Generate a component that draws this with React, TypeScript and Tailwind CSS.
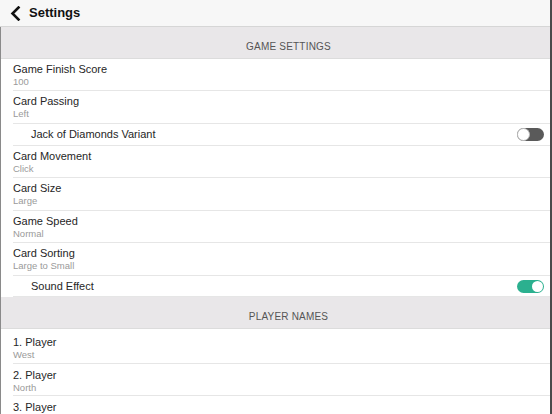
import React from "react";

function Toggle({ on }: { on: boolean }) {
  return on ? (
    <div className="relative w-[27px] h-[13px] rounded-full bg-[#2bb08f]">
      <div className="absolute right-[1px] top-[1px] w-[11px] h-[11px] rounded-full bg-white" />
    </div>
  ) : (
    <div className="relative w-[27px] h-[13px] rounded-full bg-[#5a5a5a]">
      <div className="absolute left-0 top-0 w-[13px] h-[13px] rounded-full bg-white border border-[#bdbdbd]" />
    </div>
  );
}

function TwoLine({ title, sub, h, pt = "pt-[3px]" }: { title: string; sub: string; h: string; pt?: string }) {
  return (
    <div className={`pl-[12px] shrink-0 ${h}`}>
      <div className={`flex flex-col h-full border-b border-[#e6e6e6] ${pt}`}>
        <div className="text-[11px] leading-[14px] text-[#262626]">{title}</div>
        <div className="text-[9.5px] leading-[11px] text-[#9a9a9a]">{sub}</div>
      </div>
    </div>
  );
}

function ToggleRow({ title, on, h }: { title: string; on: boolean; h: string }) {
  return (
    <div className={`pl-[12px] shrink-0 ${h}`}>
      <div className="flex items-center h-full border-b border-[#e6e6e6] pl-[18px] pr-[6px]">
        <div className="flex-1 text-[11px] text-[#262626]">{title}</div>
        <Toggle on={on} />
      </div>
    </div>
  );
}

function Section({ label }: { label: string }) {
  return (
    <div className="h-[32px] shrink-0 bg-[#e9e7e9] border-b border-[#dcdcdc] flex items-end justify-center pb-[5px] pl-[26px] text-[10px] leading-[12px] text-[#555] tracking-[0.2px]">
      {label}
    </div>
  );
}

export default function App() {
  return (
    <div
      className="w-[552px] h-[414px] overflow-hidden bg-white flex flex-col border-r-2 border-[#4a4a4a]"
      style={{ fontFamily: '"Liberation Sans", Arial, sans-serif' }}
    >
      <div className="h-[27px] shrink-0 bg-[#f7f7f7] border-b border-[#d6d6d6] flex items-center pl-[10px] gap-[8px]">
        <svg width="11" height="15" viewBox="0 0 11 15">
          <path d="M8.5 1.5 L2.5 7.5 L8.5 13.5" fill="none" stroke="#111" strokeWidth="2.6" strokeLinecap="square" />
        </svg>
        <span className="text-[13px] font-bold text-[#111]">Settings</span>
      </div>
      <div className="flex-1 flex flex-col border-l border-[#8a8a8a]">
        <Section label="GAME SETTINGS" />
        <TwoLine title="Game Finish Score" sub="100" h="h-[32px]" />
        <TwoLine title="Card Passing" sub="Left" h="h-[33px]" />
        <ToggleRow title="Jack of Diamonds Variant" on={false} h="h-[22px]" />
        <TwoLine title="Card Movement" sub="Click" h="h-[32px]" />
        <TwoLine title="Card Size" sub="Large" h="h-[33px]" />
        <TwoLine title="Game Speed" sub="Normal" h="h-[32px]" />
        <TwoLine title="Card Sorting" sub="Large to Small" h="h-[33px]" />
        <ToggleRow title="Sound Effect" on={true} h="h-[21px]" />
        <Section label="PLAYER NAMES" />
        <TwoLine title="1. Player" sub="West" h="h-[35px]" pt="pt-[6px]" />
        <TwoLine title="2. Player" sub="North" h="h-[32px]" pt="pt-[4px]" />
        <TwoLine title="3. Player" sub="East" h="h-[32px]" pt="pt-[4px]" />
      </div>
    </div>
  );
}
